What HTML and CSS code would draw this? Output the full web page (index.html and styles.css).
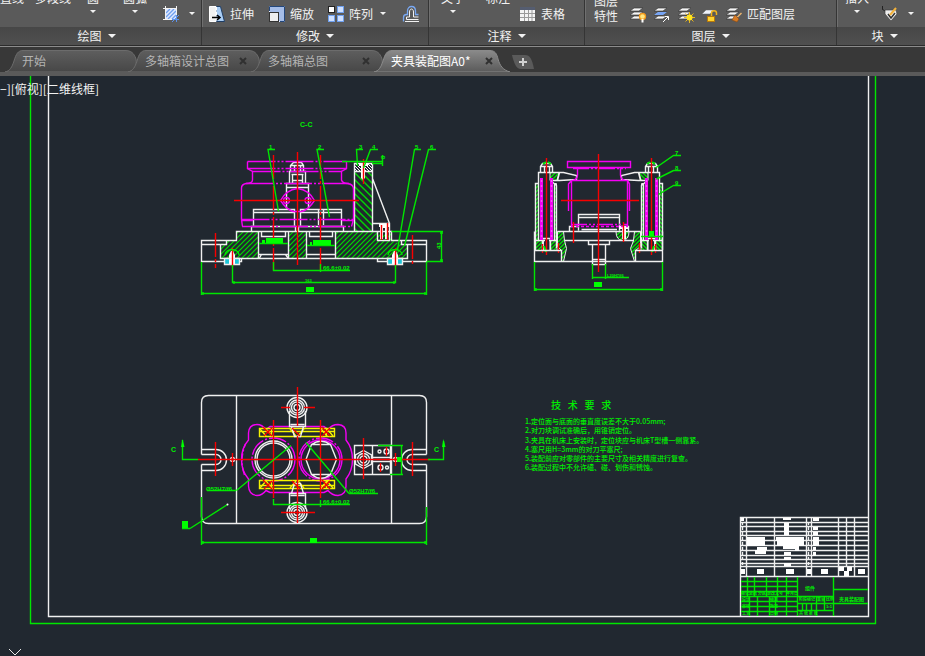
FILE: index.html
```html
<!DOCTYPE html>
<html lang="zh-CN">
<head>
    <meta charset="UTF-8">
    <meta name="viewport" content="width=device-width, initial-scale=1.0">
    <title>夹具装配图A0</title>
    <link rel="stylesheet" href="styles.css">
</head>
<body>
    <svg class="defs" width="0" height="0" aria-hidden="true">
        <defs>
            <linearGradient id="tab-dark" x1="0" y1="0" x2="0" y2="1">
                <stop offset="0" stop-color="#5e5e5e"/>
                <stop offset="1" stop-color="#474747"/>
            </linearGradient>
            <linearGradient id="tab-light" x1="0" y1="0" x2="0" y2="1">
                <stop offset="0" stop-color="#8a8a8a"/>
                <stop offset="1" stop-color="#5a5a5a"/>
            </linearGradient>
            <symbol id="tab-shape" viewBox="0 0 136 22">
                <path d="M0 22C5 21 7 17 9 11C11 4 13 .5 18 .5H120C126 .5 129 3 131 9C132 15 130 20 124 22Z"/>
            </symbol>
            <symbol id="tab-shape-on" viewBox="0 0 136 22">
                <path d="M0 22C5 21 7 17 9 11C11 4 13 .5 18 .5H116C121 .5 123 4 124 9C126 16 129 20 136 22Z"/>
            </symbol>
            <symbol id="layers" viewBox="0 0 18 18">
                <path d="M5 11h9l-4 3H1z M5 7h9l-4 3H1z M5 3h9l-4 3H1z" fill="#f4f4f4" stroke="#3a3a3a" stroke-width=".7"/>
            </symbol>
        </defs>
    </svg>

    <header class="ribbon">
        <section class="panel panel-draw">
            <div class="tools">
                <button class="big">直线<i></i></button>
                <button class="big">多段线<i></i></button>
                <button class="big">圆<i class="caret"></i></button>
                <button class="big">圆弧<i class="caret"></i></button>
                <button class="small" aria-label="图案填充">
                    <svg width="18" height="18" viewBox="0 0 18 18">
                        <rect x="4" y="4" width="10" height="10" fill="#dfe9ff"/>
                        <path d="M4 8l4-4M4 12l8-8M6 14l8-8M10 14l4-4" stroke="#6f9ff0" stroke-width="1.3"/>
                        <path d="M3.500 1v14M1 3.500h14M14.500 1v9M1 14.500h9" stroke="#f2f2f2" fill="none"/>
                        <path d="M14.500 10v7M10 14.500h7M10 17l7-7" stroke="#5c93ee" fill="none"/>
                    </svg>
                    <i class="caret"></i>
                </button>
            </div>
            <button class="title">绘图<i class="caret-lg"></i></button>
        </section>

        <section class="panel panel-modify">
            <div class="tools">
                <button class="small">
                    <svg width="18" height="18" viewBox="0 0 18 18">
                        <path d="M8 1.500h4.500l4 15H8z" fill="#a9cdf5" stroke="#1f3e66"/>
                        <path d="M1.500 1.500H8v15H1.500z" fill="#f2f2f2" stroke="#fff"/>
                        <path d="M8.500 2v15" stroke="#fff" stroke-dasharray="3 2"/>
                        <path d="M4 12.500h7M9 10l3 2.500L9 15" stroke="#000" stroke-width="1.500" fill="none"/>
                    </svg>
                    拉伸
                </button>
                <button class="small">
                    <svg width="18" height="18" viewBox="0 0 18 18">
                        <rect x="1.500" y="1.500" width="15" height="15" fill="#a5bde8" stroke="#e8efff"/>
                        <path d="M1.500 6V1.500H16.500V16.500H12" fill="none" stroke="#23477c"/>
                        <rect x="1.500" y="7.500" width="9" height="9" fill="#eee" stroke="#333"/>
                    </svg>
                    缩放
                </button>
                <button class="small">
                    <svg width="18" height="18" viewBox="0 0 18 18">
                        <rect x="1.500" y="1.500" width="6" height="6" fill="#fff" stroke="#222"/>
                        <g fill="#cfe0ff" stroke="#6fa0ee">
                            <rect x="10.500" y="1.500" width="6" height="6"/>
                            <rect x="1.500" y="10.500" width="6" height="6"/>
                            <rect x="10.500" y="10.500" width="6" height="6"/>
                        </g>
                    </svg>
                    阵列
                    <i class="caret"></i>
                </button>
                <button class="small" aria-label="偏移">
                    <svg width="18" height="18" viewBox="0 0 18 18" fill="none">
                        <path d="M1.500 16.500v-4c0-2 1-3 3-3h1V6c0-6 8-6 8 0v3.500h3" stroke="#79a8f2" stroke-width="1.300"/>
                        <path d="M3 16.500h14M4.500 14.500v-2.500h3V7c0-4 4-4 4 0v5h5M4.500 14.500h12" stroke="#f2f2f2"/>
                    </svg>
                </button>
            </div>
            <button class="title">修改<i class="caret-lg"></i></button>
        </section>

        <section class="panel panel-note">
            <div class="tools">
                <button class="big">文字<i class="caret"></i></button>
                <button class="big">标注<i></i></button>
                <button class="small">
                    <svg width="18" height="18" viewBox="0 0 18 18">
                        <path d="M1 2h15v14H1z" fill="#f4f4f4"/>
                        <path d="M1 2h15v3H1z" fill="#555d70"/>
                        <path d="M1 8.500h15M1 12.500h15M5.500 5v11M9.500 5v11M13 5v11" stroke="#9a9a9a"/>
                    </svg>
                    表格
                </button>
            </div>
            <button class="title">注释<i class="caret-lg"></i></button>
        </section>

        <section class="panel panel-layer">
            <div class="tools">
                <button class="stack">图层<br>特性</button>
                <button class="small" aria-label="关闭图层">
                    <svg width="18" height="18" viewBox="0 0 18 18">
                        <use href="#layers"/>
                        <circle cx="13.500" cy="11.500" r="3" fill="#ffe680" stroke="#f39a1c" stroke-width="1.300"/>
                        <path d="M13.500 14v3.500" stroke="#fff" stroke-width="2"/>
                    </svg>
                </button>
                <button class="small" aria-label="置为当前">
                    <svg width="18" height="18" viewBox="0 0 18 18">
                        <use href="#layers"/>
                        <path d="M5 7h9l-4 3H1z" fill="#76a4f4"/>
                        <path d="M10 17l5-5M12 11.500h3.500V15" stroke="#fff" fill="none"/>
                    </svg>
                </button>
                <button class="small" aria-label="冻结图层">
                    <svg width="18" height="18" viewBox="0 0 18 18">
                        <use href="#layers"/>
                        <path d="M12.500 7v11M7 12.500h11M8.500 8.500l8 8M16.500 8.500l-8 8" stroke="#e8b51d"/>
                        <circle cx="12.500" cy="12.500" r="3" fill="#ffe51e"/>
                    </svg>
                </button>
                <button class="small" aria-label="解锁图层">
                    <svg width="18" height="18" viewBox="0 0 18 18">
                        <path d="M5 5h8l-4 4H1z" fill="#eef2fa" stroke="#666" stroke-width=".5"/>
                        <path d="M10.500 12V8c0-3 5-3 5 0v2" stroke="#f2b51c" stroke-width="1.500" fill="none"/>
                        <rect x="6.500" y="11.500" width="7" height="5" fill="#ffd430" stroke="#b8790a"/>
                    </svg>
                </button>
                <button class="small">
                    <svg width="18" height="18" viewBox="0 0 18 18">
                        <use href="#layers"/>
                        <path d="M16.500 8l-4 4" stroke="#edb66f" stroke-width="1.500"/>
                        <path d="M10 10l4 4-2 3-5-2z" fill="#d77c25" stroke="#8c4a10" stroke-width=".6"/>
                    </svg>
                    匹配图层
                </button>
            </div>
            <button class="title">图层<i class="caret-lg"></i></button>
        </section>

        <section class="panel panel-block">
            <div class="tools">
                <button class="big">插入<i class="caret"></i></button>
                <button class="small" aria-label="编辑属性">
                    <svg width="18" height="18" viewBox="0 0 18 18">
                        <path d="M1.500 1v3M1 4l3 2" stroke="#222"/>
                        <path d="M4 5h11l1 4-6 7-6-7z" fill="#eee" stroke="#444" stroke-width=".7"/>
                        <path d="M7 9l3 4 4-5" stroke="#333" stroke-width="1.500" fill="none"/>
                        <path d="M9 10l6-7" stroke="#f3b23a" stroke-width="2"/>
                    </svg>
                    <i class="caret"></i>
                </button>
            </div>
            <button class="title">块<i class="caret-lg"></i></button>
        </section>
    </header>

    <nav class="tabs">
        <div class="tab">
            <svg class="shape"><use href="#tab-shape"/></svg>
            <a href="#">开始</a>
        </div>
        <div class="tab">
            <svg class="shape"><use href="#tab-shape"/></svg>
            <a href="#">多轴箱设计总图</a>
            <button aria-label="关闭"><svg width="8" height="8"><path d="M1 1l6 6M7 1l-6 6"/></svg></button>
        </div>
        <div class="tab">
            <svg class="shape"><use href="#tab-shape"/></svg>
            <a href="#">多轴箱总图</a>
            <button aria-label="关闭"><svg width="8" height="8"><path d="M1 1l6 6M7 1l-6 6"/></svg></button>
        </div>
        <div class="tab active">
            <svg class="shape"><use href="#tab-shape-on"/></svg>
            <a href="#">夹具装配图A0*</a>
            <button aria-label="关闭"><svg width="8" height="8"><path d="M1 1l6 6M7 1l-6 6"/></svg></button>
        </div>
        <button class="add" aria-label="新图形">
            <svg width="22" height="14" viewBox="0 0 22 14">
                <path d="M0 0H13C18 0 20 4 22 14H9C4 14 2 8 0 0Z" fill="#5a5a5a"/>
                <path d="M11 3v8M7 7h8" stroke="#d0d0d0" stroke-width="2"/>
            </svg>
        </button>
    </nav>

    <main class="canvas">
        <svg class="drawing" viewBox="0 76 925 580" preserveAspectRatio="xMinYMin meet">
            <defs>
                <pattern id="hatch" width="5" height="5" patternUnits="userSpaceOnUse">
                    <path d="M-1 6L6 -1M-1 1L1 -1M4 6L6 4" stroke="#00d800" stroke-width="1.2"/>
                </pattern>
                <pattern id="hatch-back" width="7" height="7" patternUnits="userSpaceOnUse">
                    <path d="M-1 -1L8 8M6 -1L8 1M-1 6L1 8" stroke="#00d800" stroke-width="1.4"/>
                </pattern>
                <pattern id="hatch-fine" width="4" height="4" patternUnits="userSpaceOnUse">
                    <path d="M-1 5L5 -1M-1 1L1 -1M3 5L5 3" stroke="#00e000" stroke-width="1.4"/>
                </pattern>
                <pattern id="hatch-white" width="3" height="3" patternUnits="userSpaceOnUse">
                    <path d="M-1 -1L4 4M2 -1L4 1M-1 2L1 4" stroke="#fff" stroke-width="1"/>
                </pattern>

                <!-- clamping column, drawn once and mirrored -->
                <g id="column">
                    <path class="fill-fine" d="M535.500 183.500h3v57h-3zM554.500 183.500h2v57h-2zM535.500 240.500h8v10h-8zM550 240.500h7v10h-7zM550 172.500h9l-2 8h-7z"/>
                    <path class="w" d="M538.500 240.500V172.500H563.500L576.500 175.500V179.500L559.500 180.500H550.500M550.500 180.500L556.500 185.500V248M559.500 172.500L557.500 180.500M535.500 250V183.500H538.500M554.500 183.500V240M535.500 240.500H545M549 240.500H557M542.500 250V238.500H550.500V250"/>
                    <path class="w" d="M540.500 172.500V166.500L542.500 163.500H550.500L552.500 166.500V172.500M544.500 166V172M549.500 166V172M540.500 166.500H552.500"/>
                    <path class="m bar" d="M541.500 178V240M551.500 178V240"/>
                    <path class="w" stroke-dasharray="2 3" d="M541.500 180V238M551.500 180V238" opacity=".4"/>
                    <path class="r" d="M546.500 158V255M542.500 244V253M558.500 243V253"/>
                    <path class="g thick" d="M543 164L546 162M548 162L551 164M544 246L546 252"/>
                </g>
                <g id="bolt">
                    <path class="white-fill" d="M-3 12V3L-1 -1H1L3 3V12Z"/>
                    <path d="M-7 7H-3V12H-7ZM3 7H7V12H3Z" fill="#1cc5d8"/>
                    <path class="w" d="M-7.500 6.500H7.500V12.500H-7.500Z"/>
                    <path class="r" d="M.5 -4V15"/>
                    <path class="g" d="M-7 3C-7 -4 7 -4 7 3"/>
                </g>
                <g id="clamp-top">
                    <path class="w" d="M289.500 411V426.500H305.500V411M291.500 426.500L294.500 436.500H300.500L303.500 426.500M290.500 424.500H304.500"/>
                    <circle class="w" cx="297" cy="407.500" r="10"/>
                    <circle class="w" cx="297" cy="407.500" r="7.500"/>
                    <circle class="w" cx="297" cy="407.500" r="5.500"/>
                    <circle class="w" cx="297" cy="407.500" r="3"/>
                </g>
            </defs>

            <!-- sheet frame -->
            <path class="g" d="M30.500 76V623.500H875.500V76"/>
            <path class="w" d="M48.500 76V616.500H868.500V76"/>

            <!-- section C-C -->
            <g id="section">
                <text class="note-lg" x="300" y="127">C-C</text>
                <path class="fill-hatch" d="M220.500 244.500L226.500 240.500H236.500V231.500H258.500V258.500H220.500ZM288.500 231.500H306.500V258.500H288.500ZM335.500 231.500H391.500V240.500L402.500 244.500H407.500V258.500H335.500Z"/>
                <path class="fill-back" d="M354.500 171.500H372.500V231.500H354.500Z"/>
                <path fill="url(#hatch-white)" d="M354 163h19v8h-19z"/>

                <path class="w" d="M201.500 240.500H236.500V231.500H391.500V240.500H426.500V261.500H377.500V258.500H241.500V261.500H201.500ZM201.500 244.500H226.500V240.500M220.500 244.500V258.500H407.500V244.500M401.500 240.500V244.500H426.500M258.500 231.500V258.500M288.500 231.500V258.500M306.500 231.500V258.500M335.500 231.500V258.500"/>
                <path class="w" d="M261.500 232V236.500H285.500V232M259 254.500H288M261.500 254.500L259.500 258M285.500 254.500L288 258M309.500 232V236.500H332.500V232M307 254.500H335"/>
                <path class="w" d="M253.500 225.500V209.500H294.500V225.500M253.500 212.500H294.500M251.500 231V226.500H295.500V231M300.500 225.500V209.500H341.500V225.500M300.500 212.500H341.500M298.500 231V226.500H343.500V231M318.500 210V225M323.500 210V225"/>
                <path class="w" d="M290.500 171.500V165.500L293.500 162.500H301.500L303.500 165.500V171.500M290.500 165.500H303.500M294.500 165V171M300.500 165V171M289.500 171.500H305.500V183.500H289.500ZM291.500 174.500H303.500M292.500 175V183M302.500 175V183M292.500 180.500H302.500M286.500 208.500V183.500H308.500V208.500M286.500 187.500H308.500"/>
                <path class="w" d="M354.500 231.500V163.500H372.500V231.500M354.500 171.500H372.500M372.500 223.500H389.500V240.500H377.500V231.500M372.500 178.500L389.500 223.500"/>
                <path class="white-fill" d="M359 163h9v3h-3v12l-2 2-2-2v-12h-2zM379 224h11v3h-2v12h-3v-11h-2v11h-3v-12h-1z"/>

                <path class="m" stroke-dasharray="28 2 2 2 2 2" d="M247.500 161.500H346.500M247.500 168.500H346.500M252.500 171.500H342M246 183.500H349M241.500 219.500H353.500M242 226.500H351.500"/>
                <path class="m" d="M247.500 161.500V168.500L252.500 171.500V180C252.500 183.500 249 183.500 246 183.500Q241.500 184.500 241.500 188V219.500L242.500 226.500M346.500 161.500V168.500L341.500 171.500V180Q342.500 183.500 348 183.500Q353.500 184.500 353.500 189V219.500L351.500 226.500M241.500 220.500H253M342 220.500H353"/>
                <path class="m" d="M280.500 200.500Q286 190 297.500 188.500Q309 190 314.500 200.500Q309 209 302 211.500H293Q286 209 280.500 200.500Z"/>
                <circle class="m" cx="286.500" cy="200.500" r="3"/>
                <circle class="m" cx="308" cy="200.500" r="3"/>
                <path class="r" d="M234 200.500H359M297.500 152V265M363.500 159V184M381.500 225V240M387.500 223V240"/>
                <path class="r" stroke-dasharray="24 2 3 2" d="M273.500 155V270M320.500 155V270M215.500 233V268M412.500 235V265"/>
                <use href="#bolt" x="232" y="252"/>
                <use href="#bolt" x="395" y="252"/>

                <path class="g" d="M259 243.500H288M307 245.500H335"/>
                <path class="green-fill" d="M266 238h17v5h-17zM262 240h3v3h-3zM313 240h18v5h-18zM310 242h2v3h-2zM306 287h8v5h-8z"/>
                <path class="g" d="M275 149.500H268L278.500 211.500M324 149.500H317L329.500 217M363 149.500H356.500L357.500 166M378 149.500H370.500L363.500 168M421 149.500H414.500L397.500 250M436 149.500H428.500L404.500 246"/>
                <g class="note">
                    <text x="269" y="149">1</text>
                    <text x="318" y="149">2</text>
                    <text x="359" y="149">3</text>
                    <text x="372" y="149">4</text>
                    <text x="415" y="149">5</text>
                    <text x="430" y="149">6</text>
                    <text x="323" y="270">66.6±0.02</text>
                    <text class="tiny" x="305" y="282">163</text>
                    <text transform="translate(385 159) rotate(-90)">8</text>
                    <text transform="translate(441 249) rotate(-90)">43</text>
                </g>
                <path class="g" d="M342 161.500H383M372 163.500H383M382.500 155V166M391.500 231.500H443M426.500 261.500H443M441.500 231.500V261.500M273.500 262V270.500H350M320.500 264V272M232.500 265V282.500H395.500V265M201.500 262V295M426.500 262V295M201.500 293.500H426.500"/>
                <path class="g" d="M234 281v3M394 281v3M203 292v3M425 292v3M440 233h3M440 260h3"/>
            </g>

            <!-- side view -->
            <g id="side">
                <path class="fill-fine" d="M557.500 231.500H563.500L564.500 240.500L566.500 248.500L563.500 261.500H561.500V250.500L557.500 246.500ZM640.500 231.500H634.500L633.500 240.500L630.500 248.500L634.500 261.500H635.500V250.500L640.500 246.500Z"/>
                <path class="fill-fine" d="M616 231.500H629Q629 240 622.500 240.500Q616 240 616 231.500Z"/>
                <use href="#column"/>
                <use href="#column" transform="translate(1198 0) scale(-1 1)"/>
                <path class="w" d="M534.500 231.500V261.500H662.500V231.500M534.500 250.500H561.500V261.500M662.500 250.500H635.500V261.500M557.500 231.500H640.500M564.500 240.500H634M569.500 231V226.500H578.500M628.500 231V226.500H619.500M578.500 230.500V214.500H619.500V230.500M578.500 217.500H619.500M581.500 229.500H617M588.500 240.500V244.500H609.500V240.500M592.500 244.500V259.500L592.500 264.500H605.500V244.500M592.500 259.500H605.500"/>
                <path class="white-fill" d="M619 226h9v3h-2v10h-4v-10h-3z"/>
                <path class="m" d="M567.500 161.500H630.500V167.500H567.500ZM577.500 168V175Q577.500 179 573 180.500M620.500 168V175Q620.500 179 625 180.500M571.500 180.500V226M627.500 180.500V226M568.500 211V184L571.500 180.500H627.500L629.500 184V211"/>
                <path class="m" stroke-dasharray="16 2 2 2 2 2" d="M573 168.500H626M571 224.500H628"/>
                <path class="m" stroke-dasharray="3 2" d="M571 226.500H628"/>
                <path class="r" d="M561 200.500H639M598.500 154V272M573.500 222V243M623.500 222V242"/>
                <path class="g" d="M592.500 264V279M605.500 264V279M592.500 277.500H629M534.500 262V291M662.500 262V291M534.500 289.500H662.500M641 236.500H663M536 288v3M661 288v3"/>
                <path class="green-fill" d="M594 282h8v5h-8zM649 231h5v5h-5z"/>
                <path class="g" d="M681 155.500H673.500L655.500 168M681 170.500H673.500L656.500 179M681 185.500H673.500L658.500 194.500"/>
                <g class="note">
                    <text x="675" y="155">7</text>
                    <text x="675" y="170">8</text>
                    <text x="675" y="185">9</text>
                    <text class="tiny" x="607" y="277">L20H7/f6</text>
                </g>
            </g>

            <!-- plan view -->
            <g id="plan">
                <path class="w" d="M201.500 454.500V402.500Q201.500 395.500 208.500 395.500H419.500Q426.500 395.500 426.500 402.500V454.500M201.500 464.500V516.500Q201.500 523.500 208.500 523.500H419.500Q426.500 523.500 426.500 516.500V464.500"/>
                <path class="w" d="M201.500 449.500H216A10 10 0 0 1 216 470.500H201.500M201.500 454.500H216A5 5 0 0 1 216 464.500H201.500M426.500 449.500H412A10 10 0 0 0 412 470.500H426.500M426.500 454.500H412A5 5 0 0 0 412 464.500H426.500"/>
                <path class="w" d="M236.500 395.500V523.500M391.500 395.500V523.500"/>

                <path class="m" d="M248.500 440V433Q249 424.500 257 424.500Q262 424.500 266 429.500L270 426.500H324L328 429.500Q332 424.500 338 424.500Q346 425 346 433V440Q352.500 448 352.500 459.500Q352.500 471 346 479V486Q346 495 338 495.500Q332 495.500 328 490.500L324 492.500H270L266 490.500Q262 495.500 257 495.500Q249 495 248.500 486V479Q241.500 471 241.500 459.500Q241.500 448 248.500 440Z"/>
                <g class="m">
                    <circle cx="273.500" cy="459.500" r="21.500" stroke-dasharray="18 2 2 2"/>
                    <circle cx="320.500" cy="459.500" r="21.500" stroke-dasharray="18 2 2 2"/>
                    <circle cx="320.500" cy="459.500" r="19.500"/>
                    <path d="M244.500 475Q239 460 245.500 444" stroke-dasharray="8 2 2 2"/>
                </g>
                <circle class="w" cx="273.500" cy="459.500" r="18.500"/>
                <circle class="w" cx="273.500" cy="459.500" r="16.500"/>
                <path class="w" d="M306 459.500L311.500 444.500H330.500L336.500 459.500L330.500 474.500H311.500ZM311.500 444.500Q321 438 330.500 444.500M311.500 474.500Q321 482 330.500 474.500"/>

                <path class="y" d="M259.500 428.500H334.500V436.500H259.500ZM259.500 431.500H334.500M259.500 480.500H334.500V488.500H259.500ZM259.500 485.500H334.500M271.500 429V436M326.500 429V436M271.500 481V488M326.500 481V488"/>
                <path class="y" d="M260 429l6 7M266 429l6 7M290 429l6 7M298 436l6-7M321 429l6 7M327 429l6 7M260 488l6-7M266 481l6 7M290 488l6-7M298 481l6 7M321 488l6-7M327 481l6 7"/>
                <use href="#clamp-top"/>
                <use href="#clamp-top" transform="translate(0 920) scale(1 -1)"/>

                <path class="w" d="M354.500 445.500H390.500V474.500H354.500ZM372.500 445.500V474.500M372.500 457.500H390M372.500 461.500H390"/>
                <path class="w" d="M363.500 450.500L371.500 455V464L363.500 468.500L355.500 464V455Z"/>
                <circle class="w" cx="363.500" cy="459.500" r="6"/>
                <circle class="w" cx="363.500" cy="459.500" r="3.500"/>
                <g class="w">
                    <circle cx="379.500" cy="451.500" r="1.500"/>
                    <circle cx="386.500" cy="451.500" r="2.500"/>
                    <circle cx="380.500" cy="467.500" r="2.500"/>
                    <circle cx="387" cy="467.500" r="1.500"/>
                    <circle cx="232.500" cy="459.500" r="2"/>
                    <circle cx="395.500" cy="459.500" r="2"/>
                </g>

                <path class="r" d="M198 459.500H430M297.500 387V426M297.500 436V523M281 407.500H290M304 407.500H315M281 512.500H315M215.500 442V476M412.500 442V476M232.500 453V466M395.500 453V466M363.500 438V479M273.500 420V498M320.500 420V498M386.500 447V456M380.500 463V472"/>
                <path class="r" d="M263 427l9 9M272 428l-8 8M292 428l8 8M322 427l8 9M330 428l-8 8M263 480l9 9M272 481l-8 8M292 481l8 8M322 480l8 9M330 481l-8 8"/>

                <path class="g" d="M182.500 440V459.500H198M443.500 441V459.500H428M378 445.500H403M390 474.500H403M401.500 445.500V474.500M207 490.500H236M349 493.500H378M273.500 499V504.500H350M320.500 500V507M182 528.500H190M201.500 497V545M426.500 507V545M201.500 542.500H426.500M203 541v3M425 541v3"/>
                <path class="g" d="M291 445.500L236.500 490.500M306 442.500L349 493.500M190 528.500L227.500 504.500"/>
                <path class="green-fill" d="M181 447l1.500-8 2 8zM442 447l1.500-8 2 8zM182 521h6v7h-6zM310 538h7v5h-7zM397 457h4v5h-4z"/>
                <circle class="white-fill" cx="227.500" cy="504.500" r="1"/>
                <g class="note">
                    <text class="note-lg" x="171" y="452">C</text>
                    <text class="note-lg" x="434" y="452">C</text>
                    <text x="206" y="491">Ø52H7/f6</text>
                    <text x="349" y="493">Ø52H7/f6</text>
                    <text x="323" y="504">66.6±0.02</text>
                </g>
            </g>

            <!-- technical requirements -->
            <g class="req">
                <text class="req-title" x="551" y="409">技   术   要   求</text>
                <text x="525" y="424">1.定位面与底面的垂直度误差不大于0.05mm;</text>
                <text x="525" y="433">2.对刀块调试准确后，用锥销定位。</text>
                <text x="525" y="443">3.夹具在机床上安装时，定位块应与机床T型槽一侧靠紧。</text>
                <text x="525" y="452">4.塞尺用H=3mm的对刀平塞尺;</text>
                <text x="525" y="461">5.装配前应对零部件的主要尺寸及相关精度进行复查。</text>
                <text x="525" y="470">6.装配过程中不允许磕、碰、划伤和锈蚀。</text>
            </g>

            <!-- parts list and title block -->
            <g id="title-block">
                <path class="w" d="M740.500 616V517.500H868.500M740.500 522.500H868M740.500 526.500H868M740.500 531.500H868M740.500 535.500H868M740.500 540.500H868M740.500 545.500H868M740.500 550.500H868M740.500 555.500H868M740.500 559.500H868M740.500 563.500H868M740.500 566.500H868M740.500 576.500H868M746.500 517V576M774.500 517V576M806.500 517V576M811.500 517V576M838.500 517V576M846.500 517V566M854.500 517V576"/>
                <path class="white-fill" d="M747 537h18v9h-18zM757 547h10v3h-10zM755 550h11v4h-11zM776 537h28v4h-28zM777 541h27v5h-27zM783 546h16v3h-16zM795 549h4v2h-4zM783 518h8v2h-8zM784 523h5v12h-5zM784 552h7v3h-7zM784 557h7v3h-7zM784 563h7v3h-7zM813 518h6v3h-6zM813 527h5v3h-5zM813 532h5v3h-5zM813 537h6v9h-6zM813 547h3v3h-3zM813 552h3v4h-3zM757 569h7v5h-7zM786 569h8v5h-8zM807 569h4v5h-4zM821 569h7v5h-7zM839 567h5v4h-5zM847 567h5v4h-5zM844 571h5v5h-5zM858 569h7v5h-7zM741 569h4v5h-4zM741 518h3v3h-3z"/>
                <path class="w" stroke-dasharray="3 2" d="M742.500 522V566M808.500 522V566"/>
                <path class="g" d="M741 581.500H797M741 586.500H797M741 591.500H797M741 596.500H833M741 601.500H797M741 606.500H797M741 611.500H797M747.500 577V596M754.500 577V596M766.500 577V596M777.500 577V596M786.500 577V596M797.500 577V616M833.500 577V616M749.500 596V616M757.500 596V616M769.500 596V616M775.500 596V616M786.500 596V616M833.500 589.500H868M833.500 603.500H868M797.500 603.500H833M797.500 610.500H833M816.500 596V616M824.500 596V610M802.500 603V610M806.500 603V610M811.500 603V610"/>
                <g class="cells">
                    <text x="741" y="595">标记</text>
                    <text x="749" y="595">处数</text>
                    <text x="758" y="595">分区</text>
                    <text x="767" y="595">更改文号</text>
                    <text x="786" y="595">年月日</text>
                    <text x="742" y="601">设计</text>
                    <text x="742" y="608">审核</text>
                    <text x="742" y="615">工艺</text>
                    <text x="770" y="601">标准</text>
                    <text x="770" y="608">批准</text>
                    <text x="770" y="615">日期</text>
                    <text x="799" y="601">阶段标记</text>
                    <text x="817" y="601">重量</text>
                    <text x="826" y="601">比例</text>
                    <text x="826" y="608">1:1</text>
                    <text x="799" y="615">共 张 第 张</text>
                    <text class="cell-lg" x="805" y="590">组件</text>
                    <text class="cell-lg" x="839" y="601">夹具装配图</text>
                </g>
            </g>
        </svg>
        <div class="view-label">−][俯视][二维线框]</div>
        <button class="expand" aria-label="展开命令行"><svg width="14" height="8"><path d="M1 1l6 6 6-6"/></svg></button>
    </main>
</body>
</html>
```
FILE: styles.css
```css
* {
    box-sizing: border-box;
}
body {
    margin: 0;
    height: 100vh;
    display: flex;
    flex-direction: column;
    overflow: hidden;
    background: #212830;
    color: #f2f2f2;
    font-family: "Noto Sans CJK SC", sans-serif;
    font-size: 12px;
    line-height: 16px;
}
button {
    padding: 0;
    border: 0;
    background: none;
    color: inherit;
    font: inherit;
    white-space: nowrap;
}
.defs {
    position: absolute;
}

/* ribbon */
.ribbon {
    flex: none;
    display: flex;
    height: 47px;
    margin-left: -8px;
    overflow: hidden;
    background: #5a5a5a;
    border-bottom: 1px solid #8c8c8c;
    box-shadow: inset 0 -1px #2c2c2c;
}
.panel {
    flex: none;
    display: flex;
    flex-direction: column;
    height: 45px;
    border-right: 1px solid #353535;
    box-shadow: 1px 0 #707070;
}
.panel-draw { width: 210px; }
.panel-modify { width: 227px; }
.panel-note { width: 156px; }
.panel-layer { width: 252px; }
.panel-block { flex: 1 0 96px; }

.tools {
    display: grid;
    grid-template-rows: 27px;
    height: 27px;
    align-items: end;
    justify-content: start;
}
.panel-draw .tools { grid-template-columns: 40px 42px 38px 46px 36px; }
.panel-modify .tools { grid-template-columns: 60px 59px 75px 24px; padding-left: 6px; }
.panel-note .tools { grid-template-columns: 48px 42px 60px; }
.panel-layer .tools { grid-template-columns: 42px 24px 24px 24px 24px 72px; }
.panel-block .tools { grid-template-columns: 40px 36px; }

.big {
    display: flex;
    flex-direction: column;
    align-items: center;
    height: 37px;
}
.big i {
    margin-bottom: 14px;
}
.stack {
    height: 32px;
    line-height: 15px;
    margin-bottom: 3px;
}
.small {
    display: flex;
    align-items: center;
    height: 27px;
    gap: 4px;
}
.panel-draw .small,
.panel-block .small {
    gap: 6px;
    padding-left: 4px;
}
.panel-layer .small {
    padding-left: 2px;
}
.small .caret {
    margin-left: 3px;
}
.small svg {
    flex: none;
}
.caret {
    width: 5px;
    border: solid transparent;
    border-width: 3px 3px 0;
    border-top-color: #f2f2f2;
}
.big .caret {
    margin-top: 4px;
}
.title {
    display: flex;
    justify-content: center;
    align-items: center;
    gap: 6px;
    height: 18px;
    background: linear-gradient(#474747, #505050);
}
.caret-lg {
    border: solid transparent;
    border-width: 4px 4px 0;
    border-top-color: #f2f2f2;
}

/* document tabs */
.tabs {
    flex: none;
    display: flex;
    align-items: flex-end;
    height: 29px;
    padding-left: 5px;
    background: #383838;
    border-bottom: 4px solid #5a5a5a;
}
.tab {
    position: relative;
    flex: none;
    display: flex;
    align-items: center;
    justify-content: space-between;
    width: 123px;
    height: 22px;
    padding: 0 4px 0 17px;
}
.tab .shape {
    position: absolute;
    left: 0;
    top: 0;
    width: 136px;
    height: 22px;
    fill: url(#tab-dark);
    stroke: #6c6c6c;
    stroke-width: 1px;
}
.tab.active .shape {
    fill: url(#tab-light);
    stroke: #8a8a8a;
}
.tab a {
    position: relative;
    color: #b4b4b4;
    text-decoration: none;
}
.tab.active a {
    color: #fff;
}
.tab button {
    position: relative;
    display: flex;
}
.tab button path {
    stroke: #303030;
    stroke-width: 2px;
}
.add {
    display: flex;
    margin: 0 0 3px 15px;
}

/* drawing area */
.canvas {
    position: relative;
    flex: 1;
    min-height: 0;
}
.drawing {
    display: block;
    width: 100%;
    height: 100%;
    fill: none;
    stroke-width: 1.4;
}
.w { stroke: #f0f0f0; }
.g { stroke: #00e600; }
.r { stroke: #f80000; }
.m { stroke: #f400f4; }
.y { stroke: #f4f400; }
.thick { stroke-width: 2px; }
.bar { stroke-width: 3px; }
.white-fill { fill: #fff; }
.green-fill { fill: #00ff00; }
.fill-hatch {
    fill: url(#hatch);
}
.fill-back {
    fill: url(#hatch-back);
}
.fill-fine {
    fill: url(#hatch-fine);
    stroke: #ececec;
    stroke-width: 1px;
}
.drawing text {
    fill: #00f000;
    white-space: pre;
}
.note text {
    font: bold 6px "Liberation Sans", sans-serif;
}
.note text.tiny {
    font-size: 4px;
}
.drawing text.note-lg {
    font: bold 7px "Liberation Sans", sans-serif;
}
.req text {
    font-size: 7px;
    font-weight: 500;
}
.req text.req-title {
    font-size: 10px;
}
.cells text {
    font-size: 4px;
    font-weight: bold;
}
.cells text.cell-lg {
    font-size: 5px;
}
.view-label {
    position: absolute;
    left: 0;
    top: 5px;
}
.expand {
    position: absolute;
    left: 8px;
    bottom: 0;
    display: flex;
}
.expand path {
    fill: none;
    stroke: #e8e8e8;
    stroke-width: 1px;
}
```
